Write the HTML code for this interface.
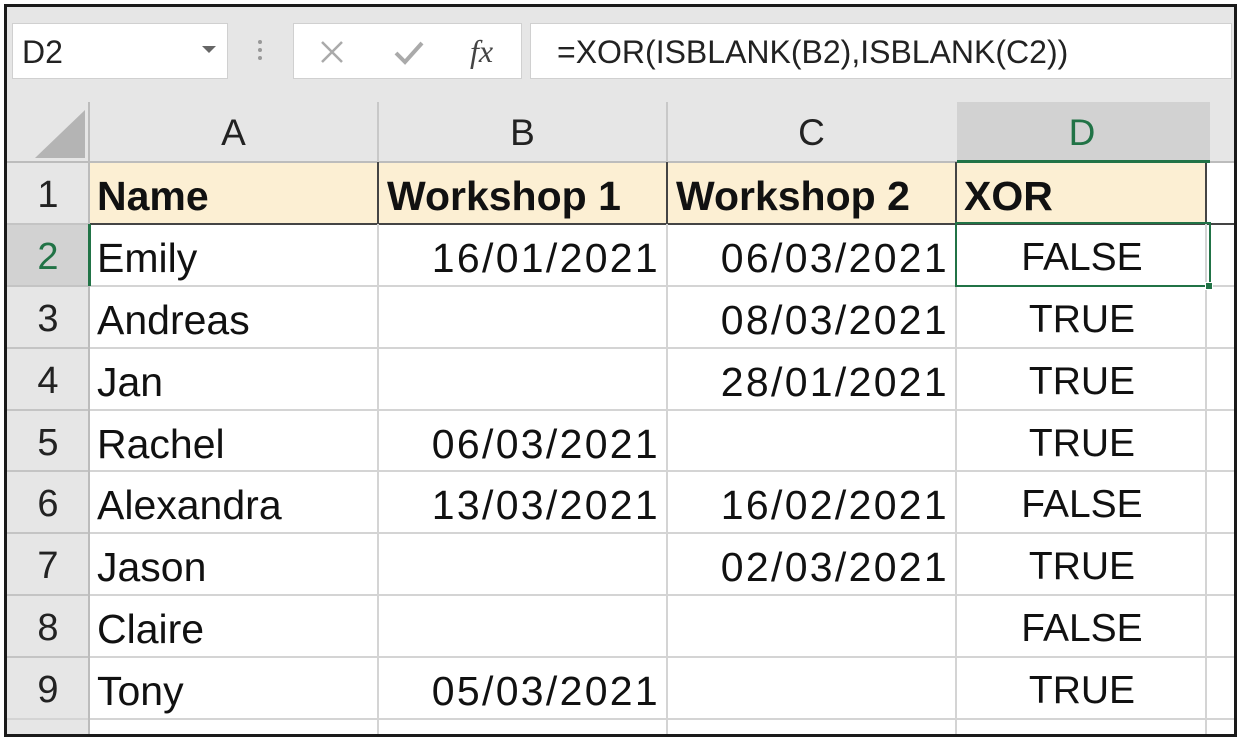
<!DOCTYPE html>
<html><head><meta charset="utf-8"><style>
*{margin:0;padding:0;box-sizing:border-box}
body{width:1240px;height:741px;background:#fff;position:relative;overflow:hidden;font-family:"Liberation Sans",sans-serif}
.a{position:absolute}
.frame{left:4px;top:4px;width:1233px;height:733px;border:3px solid #1a1a1a;background:#e6e6e6}
.box{background:#fff;border:1px solid #d0d0d0}
.c{position:absolute;font-size:41px;color:#111;white-space:nowrap;line-height:62px}
.hl{position:absolute;background:#d4d4d4}
.rh{position:absolute;left:7px;width:82px;text-align:center;font-size:38px;color:#222;line-height:62px}
.ch{position:absolute;top:102px;height:60px;text-align:center;font-size:37px;color:#222;line-height:62px}
</style></head><body>
<div class="a frame"></div>
<div class="a box" style="left:12px;top:23px;width:216px;height:56px"></div>
<div class="a" style="left:22px;top:23px;font-size:32px;line-height:58px;color:#222">D2</div>
<div class="a" style="left:202px;top:46px;width:0;height:0;border-left:7px solid transparent;border-right:7px solid transparent;border-top:7px solid #666"></div>
<div class="a" style="left:258px;top:40px;width:4px;height:4px;background:#999;border-radius:2px;box-shadow:0 8px 0 #999,0 16px 0 #999"></div>
<div class="a box" style="left:293px;top:23px;width:229px;height:56px"></div>
<svg class="a" style="left:318px;top:38px" width="28" height="28"><path d="M4 4L24 24M24 4L4 24" stroke="#aaa" stroke-width="2.5"/></svg>
<svg class="a" style="left:393px;top:38px" width="32" height="28"><path d="M3 15L12 24L29 5" stroke="#aaa" stroke-width="4" fill="none"/></svg>
<div class="a" style="left:470px;top:23px;font-family:'Liberation Serif',serif;font-style:italic;font-size:32px;line-height:56px;color:#444">fx</div>
<div class="a box" style="left:530px;top:23px;width:702px;height:56px"></div>
<div class="a" style="left:557px;top:23px;font-size:32px;line-height:58px;color:#222">=XOR(ISBLANK(B2),ISBLANK(C2))</div>

<div class="a" style="left:89px;top:162px;width:1145px;height:572px;background:#fff"></div>
<div class="a" style="left:89px;top:162px;width:1117px;height:62px;background:#fcefd3"></div>
<div class="a" style="left:957px;top:102px;width:253px;height:60px;background:#d2d2d2"></div>
<div class="a" style="left:7px;top:224px;width:82px;height:62px;background:#d2d2d2"></div>
<svg class="a" style="left:33px;top:108px" width="54" height="52"><path d="M52 2L52 50L2 50Z" fill="#b4b4b4"/></svg>

<div class="hl" style="left:7px;top:161px;width:1227px;height:2px;background:#bcbcbc"></div>
<div class="hl" style="left:89px;top:223px;width:1145px;height:2px;background:#444"></div>
<div class="hl" style="left:89px;top:285px;width:1145px;height:2px"></div>
<div class="hl" style="left:89px;top:347px;width:1145px;height:2px"></div>
<div class="hl" style="left:89px;top:409px;width:1145px;height:2px"></div>
<div class="hl" style="left:89px;top:470px;width:1145px;height:2px"></div>
<div class="hl" style="left:89px;top:532px;width:1145px;height:2px"></div>
<div class="hl" style="left:89px;top:594px;width:1145px;height:2px"></div>
<div class="hl" style="left:89px;top:656px;width:1145px;height:2px"></div>
<div class="hl" style="left:7px;top:718px;width:1227px;height:2px"></div>
<div class="hl" style="left:7px;top:223px;width:82px;height:2px;background:#c4c4c4"></div>
<div class="hl" style="left:7px;top:285px;width:82px;height:2px;background:#c4c4c4"></div>
<div class="hl" style="left:7px;top:347px;width:82px;height:2px;background:#c4c4c4"></div>
<div class="hl" style="left:7px;top:409px;width:82px;height:2px;background:#c4c4c4"></div>
<div class="hl" style="left:7px;top:470px;width:82px;height:2px;background:#c4c4c4"></div>
<div class="hl" style="left:7px;top:532px;width:82px;height:2px;background:#c4c4c4"></div>
<div class="hl" style="left:7px;top:594px;width:82px;height:2px;background:#c4c4c4"></div>
<div class="hl" style="left:7px;top:656px;width:82px;height:2px;background:#c4c4c4"></div>
<div class="hl" style="left:88px;top:102px;width:2px;height:632px;background:#bcbcbc"></div>
<div class="hl" style="left:377px;top:102px;width:2px;height:60px;background:#c8c8c8"></div>
<div class="hl" style="left:666px;top:102px;width:2px;height:60px;background:#c8c8c8"></div>
<div class="hl" style="left:377px;top:162px;width:2px;height:62px;background:#444"></div>
<div class="hl" style="left:666px;top:162px;width:2px;height:62px;background:#444"></div>
<div class="hl" style="left:955px;top:162px;width:2px;height:62px;background:#444"></div>
<div class="hl" style="left:1205px;top:162px;width:2px;height:62px;background:#444"></div>
<div class="hl" style="left:377px;top:224px;width:2px;height:510px"></div>
<div class="hl" style="left:666px;top:224px;width:2px;height:510px"></div>
<div class="hl" style="left:955px;top:224px;width:2px;height:510px"></div>
<div class="hl" style="left:1205px;top:224px;width:2px;height:510px"></div>
<div class="a" style="left:88px;top:224px;width:3px;height:62px;background:#217346"></div>
<div class="a" style="left:957px;top:160px;width:253px;height:3px;background:#217346"></div>
<div class="a" style="left:955px;top:222px;width:256px;height:65px;border:2.5px solid #217346"></div>
<div class="a" style="left:1205px;top:282px;width:8px;height:8px;background:#217346;border:1px solid #fff"></div>

<div class="ch" style="left:89px;width:289px">A</div>
<div class="ch" style="left:378px;width:289px">B</div>
<div class="ch" style="left:667px;width:289px">C</div>
<div class="ch" style="left:957px;width:250px;color:#217346">D</div>

<div class="rh" style="top:164px">1</div>
<div class="rh" style="top:226px;color:#217346">2</div>
<div class="rh" style="top:288px">3</div>
<div class="rh" style="top:350px">4</div>
<div class="rh" style="top:412px">5</div>
<div class="rh" style="top:473px">6</div>
<div class="rh" style="top:535px">7</div>
<div class="rh" style="top:597px">8</div>
<div class="rh" style="top:659px">9</div>

<div class="c" style="left:97px;top:165px;font-weight:bold">Name</div>
<div class="c" style="left:387px;top:165px;font-weight:bold">Workshop 1</div>
<div class="c" style="left:676px;top:165px;font-weight:bold">Workshop 2</div>
<div class="c" style="left:964px;top:165px;font-weight:bold">XOR</div>

<div class="c" style="left:97px;top:227px">Emily</div>
<div class="c" style="left:97px;top:289px">Andreas</div>
<div class="c" style="left:97px;top:351px">Jan</div>
<div class="c" style="left:97px;top:413px">Rachel</div>
<div class="c" style="left:97px;top:474px">Alexandra</div>
<div class="c" style="left:97px;top:536px">Jason</div>
<div class="c" style="left:97px;top:598px">Claire</div>
<div class="c" style="left:97px;top:660px">Tony</div>

<div class="c" style="right:580px;top:227px;letter-spacing:2.3px">16/01/2021</div>
<div class="c" style="right:580px;top:413px;letter-spacing:2.3px">06/03/2021</div>
<div class="c" style="right:580px;top:474px;letter-spacing:2.3px">13/03/2021</div>
<div class="c" style="right:580px;top:660px;letter-spacing:2.3px">05/03/2021</div>

<div class="c" style="right:291px;top:227px;letter-spacing:2.3px">06/03/2021</div>
<div class="c" style="right:291px;top:289px;letter-spacing:2.3px">08/03/2021</div>
<div class="c" style="right:291px;top:351px;letter-spacing:2.3px">28/01/2021</div>
<div class="c" style="right:291px;top:474px;letter-spacing:2.3px">16/02/2021</div>
<div class="c" style="right:291px;top:536px;letter-spacing:2.3px">02/03/2021</div>

<div class="c" style="left:957px;width:250px;text-align:center;top:227px;font-size:39px">FALSE</div>
<div class="c" style="left:957px;width:250px;text-align:center;top:289px;font-size:39px">TRUE</div>
<div class="c" style="left:957px;width:250px;text-align:center;top:351px;font-size:39px">TRUE</div>
<div class="c" style="left:957px;width:250px;text-align:center;top:413px;font-size:39px">TRUE</div>
<div class="c" style="left:957px;width:250px;text-align:center;top:474px;font-size:39px">FALSE</div>
<div class="c" style="left:957px;width:250px;text-align:center;top:536px;font-size:39px">TRUE</div>
<div class="c" style="left:957px;width:250px;text-align:center;top:598px;font-size:39px">FALSE</div>
<div class="c" style="left:957px;width:250px;text-align:center;top:660px;font-size:39px">TRUE</div>
</body></html>
